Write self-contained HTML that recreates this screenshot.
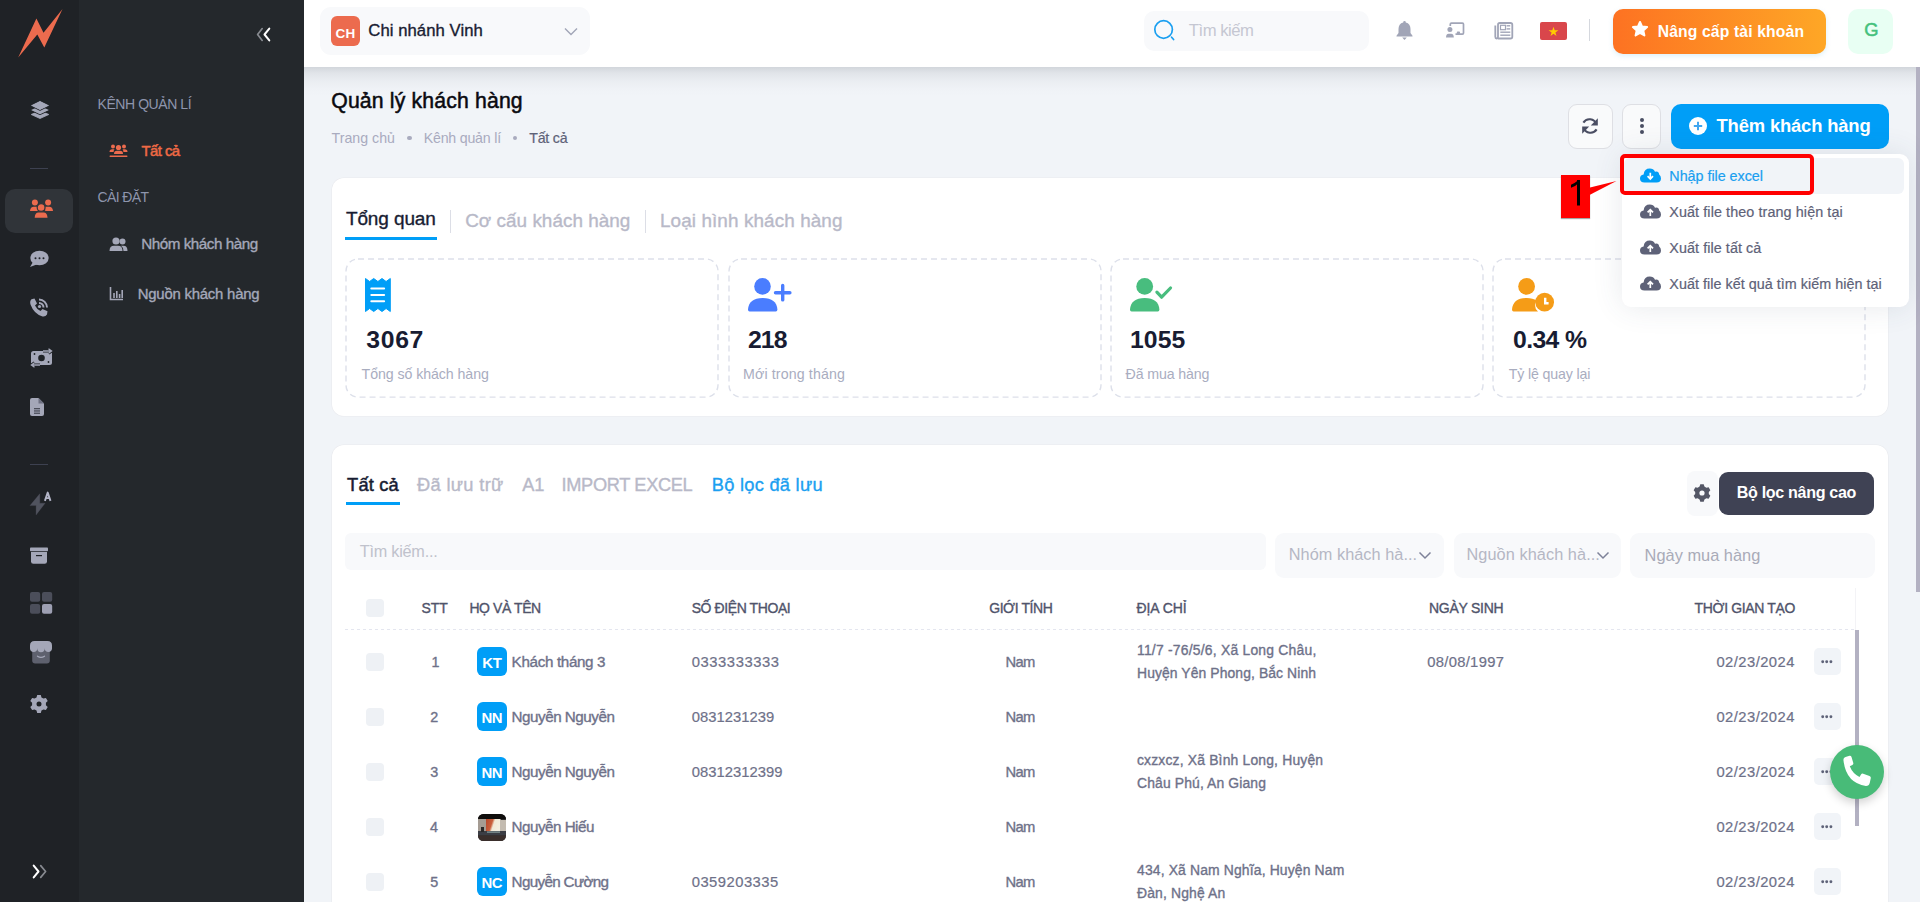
<!DOCTYPE html><html><head><meta charset="utf-8"><style>
*{box-sizing:border-box}
html,body{margin:0;padding:0;width:1920px;height:902px;overflow:hidden;background:#f1f4f8;font-family:"Liberation Sans",sans-serif}
.a{position:absolute}
.t{position:absolute;white-space:nowrap}
</style></head><body>
<div class="a" style="left:0px;top:0px;width:79px;height:902px;background:#1f2226"></div><div class="a" style="left:79px;top:0px;width:225px;height:902px;background:#24282c"></div><svg class="a" style="left:0px;top:0px;" width="80" height="80" viewBox="0 0 80 80"><polygon points="18.2,57.6 36.4,18.6 43.5,32.8 62.5,8.9 44.3,47.4 37.3,34.6" fill="#ec6b4e"/></svg><svg class="a" style="left:30px;top:99px;" width="20" height="22" viewBox="0 0 20 22"><path d="M1.1999999999999993 15.5 L10 11.5 L18.8 15.5 L10 19.5Z" fill="#a4a7b8" stroke="#a4a7b8" stroke-width="0.8" stroke-linejoin="round"/><path d="M0.5999999999999996 11.1 L10 6.699999999999999 L19.4 11.1 L10 15.5Z" fill="#a4a7b8" stroke="#1f2226" stroke-width="1.2" stroke-linejoin="round"/><path d="M1.0999999999999996 11.1 L10 7.0 L18.9 11.1 L10 15.2Z" fill="#a4a7b8"/><path d="M0.40000000000000036 6.5 L10 1.7999999999999998 L19.6 6.5 L10 11.2Z" fill="#a4a7b8" stroke="#1f2226" stroke-width="1.2" stroke-linejoin="round"/><path d="M0.9000000000000004 6.5 L10 2.0999999999999996 L19.1 6.5 L10 10.9Z" fill="#a4a7b8"/></svg><div class="a" style="left:30px;top:168px;width:18px;height:1px;background:#3d4150"></div><div class="a" style="left:5px;top:189px;width:68px;height:44px;background:#303439;border-radius:10px"></div><svg class="a" style="left:29px;top:199px;" width="25" height="20" viewBox="0 0 25 20"><g fill="#ec6b4e"><circle cx="5.9" cy="3.6" r="3"/><circle cx="19.1" cy="3.6" r="3"/><path d="M1 12.1 Q1.3 7.7 5 7.7 L8.8 7.7 L8.8 12.1Z"/><path d="M24 12.1 Q23.7 7.7 20 7.7 L16.2 7.7 L16.2 12.1Z"/></g><g fill="#ec6b4e" stroke="#303439" stroke-width="1.2"><circle cx="12.1" cy="8.5" r="3.9"/><path d="M5 19.3 Q5.2 12.8 9.5 12.8 L14.7 12.8 Q19 12.8 19.2 19.3Z"/></g></svg><svg class="a" style="left:29px;top:250px;" width="20" height="18" viewBox="0 0 20 18"><g fill="#a4a7b8"><ellipse cx="10.5" cy="8" rx="9.2" ry="7.3"/><path d="M4 12 L1 17 L9 14Z"/></g><g fill="#1f2226"><circle cx="6.5" cy="8.3" r="1"/><circle cx="10.5" cy="8.3" r="1"/><circle cx="14.5" cy="8.3" r="1"/></g></svg><svg class="a" style="left:29px;top:298px;" width="20" height="20" viewBox="0 0 20 20"><path d="M2.5 1.2 L5.5 0.5 L8 5.5 L6 7.5 Q7.5 11 11.5 13 L13.5 11 L18.5 13.3 L18 16.5 Q16.5 19 13.5 18.5 Q5 16 1.5 6.5 Q0.5 3 2.5 1.2Z" fill="#a4a7b8"/><path d="M10 1.5 A8 8 0 0 1 18 9.5" stroke="#a4a7b8" stroke-width="2" fill="none"/><path d="M10 5 A4.5 4.5 0 0 1 14.5 9.5" stroke="#a4a7b8" stroke-width="2" fill="none"/><circle cx="10.5" cy="8.5" r="1.6" fill="#a4a7b8"/></svg><svg class="a" style="left:29px;top:348px;" width="25" height="20" viewBox="0 0 25 20"><rect x="2" y="3" width="21" height="14" rx="2.5" fill="#a4a7b8"/><circle cx="12.5" cy="10" r="3.3" fill="#1f2226"/><circle cx="5.5" cy="6" r="0.9" fill="#1f2226"/><circle cx="19.5" cy="14" r="0.9" fill="#1f2226"/><path d="M14 3 L22 3 M19.5 0.8 L22.5 3 L19.5 5.2" stroke="#1f2226" stroke-width="3" fill="none"/><path d="M14 3 L22 3 M19.5 0.8 L22.5 3 L19.5 5.2" stroke="#a4a7b8" stroke-width="1.4" fill="none"/><path d="M11 17 L3 17 M5.5 14.8 L2.5 17 L5.5 19.2" stroke="#1f2226" stroke-width="3" fill="none"/><path d="M11 17 L3 17 M5.5 14.8 L2.5 17 L5.5 19.2" stroke="#a4a7b8" stroke-width="1.4" fill="none"/></svg><svg class="a" style="left:29px;top:397px;" width="16" height="20" viewBox="0 0 16 20"><path d="M3 1 L9.5 1 L15 6.5 L15 17 Q15 19 13 19 L3 19 Q1 19 1 17 L1 3 Q1 1 3 1Z" fill="#a4a7b8"/><path d="M9.5 1 L9.5 6.5 L15 6.5Z" fill="#6e7182"/><rect x="5" y="11" width="6" height="1.3" fill="#4b4e5a"/><rect x="5" y="13.3" width="6" height="1.3" fill="#4b4e5a"/><rect x="5" y="15.6" width="6" height="1.3" fill="#4b4e5a"/></svg><div class="a" style="left:30px;top:464px;width:18px;height:1px;background:#3d4150"></div><svg class="a" style="left:29px;top:491px;" width="24" height="26" viewBox="0 0 24 26"><polygon points="10.8,2.7 1,14.6 7.1,14.6 7.1,23.9 16.1,12.2 10.8,12.2" fill="#50535e" stroke="#50535e" stroke-width="0.3" stroke-linejoin="round"/><path d="M15.9 9.9 L18.7 1.6 L21.5 9.9 M16.8 7.1 L20.6 7.1" stroke="#b4b6c8" stroke-width="1.9" fill="none" stroke-linejoin="round"/></svg><svg class="a" style="left:29px;top:546px;" width="20" height="19" viewBox="0 0 20 19"><rect x="1" y="1.5" width="18" height="3.8" rx="0.8" fill="#a4a7b8"/><path d="M2 6 L18 6 L18 15.5 Q18 17.8 15.7 17.8 L4.3 17.8 Q2 17.8 2 15.5Z" fill="#a4a7b8"/><rect x="7" y="9" width="6" height="1.2" fill="#1f2226"/></svg><svg class="a" style="left:29px;top:591px;" width="24" height="24" viewBox="0 0 24 24"><rect x="1" y="1" width="10.2" height="9.8" rx="2" fill="#4b4e5a"/><rect x="13" y="1" width="10.2" height="9.8" rx="2" fill="#4b4e5a"/><rect x="1" y="13" width="10.2" height="9.8" rx="2" fill="#4b4e5a"/><rect x="13" y="13" width="10.2" height="9.8" rx="2" fill="#9d9fb2"/></svg><svg class="a" style="left:29px;top:640px;" width="24" height="25" viewBox="0 0 24 25"><path d="M3.2 9 L20.8 9 L20.8 20.5 Q20.8 23.5 17.8 23.5 L6.2 23.5 Q3.2 23.5 3.2 20.5Z" fill="#5e616e"/><path d="M8.5 16.2 Q12 18.6 15.5 16.2" stroke="#a4a7b8" stroke-width="1.3" stroke-linecap="round" fill="none"/><path d="M5.5 1 L18.5 1 Q23 1 23 5.5 L23 8.5 A3.67 3.67 0 0 1 15.67 8.5 A3.67 3.67 0 0 1 8.33 8.5 A3.67 3.67 0 0 1 1 8.5 L1 5.5 Q1 1 5.5 1Z" fill="#a4a7b8"/><path d="M8.33 8.5 L8.33 9.5 M15.67 8.5 L15.67 9.5" stroke="#5e616e" stroke-width="0.01"/></svg><svg class="a" style="left:29px;top:694px;" width="20" height="20" viewBox="0 0 20 20"><path d="M7.53 3.45 L8.19 0.98 L11.81 0.98 L12.47 3.45 L14.44 4.59 L16.91 3.92 L18.72 7.06 L16.91 8.86 L16.91 11.14 L18.72 12.94 L16.91 16.08 L14.44 15.41 L12.47 16.55 L11.81 19.02 L8.19 19.02 L7.53 16.55 L5.56 15.41 L3.09 16.08 L1.28 12.94 L3.09 11.14 L3.09 8.86 L1.28 7.06 L3.09 3.92 L5.56 4.59Z M12.5 10 A2.5 2.5 0 1 0 7.5 10 A2.5 2.5 0 1 0 12.5 10Z" fill="#a4a7b8" fill-rule="evenodd"/></svg><svg class="a" style="left:30px;top:862px;" width="19" height="19" viewBox="0 0 19 19"><path d="M3.7 3.6 L8.5 9.5 L3.7 15.4" stroke="#ffffff" stroke-width="2" stroke-linecap="round" stroke-linejoin="round" fill="none"/><path d="M10.7 3.6 L15.6 9.5 L10.7 15.4" stroke="#878a90" stroke-width="1.7" stroke-linecap="round" stroke-linejoin="round" fill="none"/></svg><div class="a" style="left:304px;top:0px;width:0px;height:0px;"></div><svg class="a" style="left:255px;top:26px;" width="17" height="17" viewBox="0 0 17 17"><path d="M7.2 2.6 L2.6 8.5 L7.2 14.4" stroke="#878a90" stroke-width="1.7" stroke-linecap="round" stroke-linejoin="round" fill="none"/><path d="M14.3 2.6 L9.5 8.5 L14.3 14.4" stroke="#ffffff" stroke-width="2" stroke-linecap="round" stroke-linejoin="round" fill="none"/></svg><div class="t " style="left:97.5px;top:97.00px;font-size:14.03px;line-height:14.03px;color:#8e95ad;font-weight:400;letter-spacing:-0.438px;">KÊNH QUẢN LÍ</div><svg class="a" style="left:109px;top:144px;" width="19" height="14" viewBox="0 0 19 14"><g fill="#ec6b4e"><circle cx="4" cy="2.4" r="2"/><circle cx="15" cy="2.4" r="2"/><circle cx="9.5" cy="3.5" r="2.6"/><path d="M0.5 8 Q0.5 5.3 3.3 5.3 L5.5 5.3 Q4.5 6.5 4.6 8Z"/><path d="M18.5 8 Q18.5 5.3 15.7 5.3 L13.5 5.3 Q14.5 6.5 14.4 8Z"/><path d="M5 10 Q5 6.8 8 6.8 L11 6.8 Q14 6.8 14 10Z"/><rect x="0.5" y="11.5" width="18" height="1.5" rx="0.7"/></g></svg><div class="t " style="left:141.4px;top:144.00px;font-size:14.93px;line-height:14.93px;color:#ee6a45;font-weight:400;-webkit-text-stroke:0.5px #ee6a45;letter-spacing:-0.538px;">Tất cả</div><div class="t " style="left:97.5px;top:190.00px;font-size:14.03px;line-height:14.03px;color:#8e95ad;font-weight:400;letter-spacing:-0.608px;">CÀI ĐẶT</div><svg class="a" style="left:109px;top:237px;" width="19" height="15" viewBox="0 0 19 15"><g fill="#a4a7b8"><circle cx="7" cy="4" r="3.6"/><path d="M0.5 14 Q0.5 8.8 5 8.8 L9 8.8 Q13.5 8.8 13.5 14Z"/><circle cx="13.5" cy="4.5" r="3"/><path d="M12 8.8 L14.5 8.8 Q18.5 8.8 18.5 14 L14.5 14 Q14.5 10.5 12 8.8Z"/></g></svg><div class="t " style="left:141.2px;top:236.00px;font-size:15.22px;line-height:15.22px;color:#a4a8ba;font-weight:400;-webkit-text-stroke:0.35px #a4a8ba;letter-spacing:-0.467px;">Nhóm khách hàng</div><svg class="a" style="left:109px;top:286px;" width="15" height="15" viewBox="0 0 15 15"><path d="M1.5 1 L1.5 13.5 L14 13.5" stroke="#a4a7b8" stroke-width="1.6" fill="none"/><g fill="#a4a7b8"><rect x="4.2" y="7" width="1.6" height="5"/><rect x="7" y="5" width="1.6" height="7"/><rect x="9.8" y="8" width="1.6" height="4"/><rect x="12.4" y="4" width="1.6" height="8"/></g></svg><div class="t " style="left:137.7px;top:287.00px;font-size:14.93px;line-height:14.93px;color:#a4a8ba;font-weight:400;-webkit-text-stroke:0.35px #a4a8ba;letter-spacing:-0.223px;">Nguồn khách hàng</div><div class="a" style="left:304px;top:67px;width:1612px;height:30px;background:linear-gradient(180deg,rgba(20,30,45,0.14) 0px,rgba(20,30,45,0.075) 6px,rgba(20,30,45,0.03) 14px,rgba(20,30,45,0.008) 22px,rgba(20,30,45,0) 30px)"></div><div class="a" style="left:304px;top:0px;width:1616px;height:67px;background:#fff;z-index:2"></div><div style="position:absolute;left:0;top:0;z-index:3"><div class="a" style="left:320px;top:7px;width:270px;height:48px;background:#f8f9fb;border-radius:11px"></div><div class="a" style="left:331px;top:16px;width:29px;height:30px;background:#ec6b4e;border-radius:6px"></div><div class="t " style="left:335.4px;top:27.00px;font-size:13.49px;line-height:13.49px;color:#fff;font-weight:700;letter-spacing:0.315px;">CH</div><div class="t " style="left:368.3px;top:23.00px;font-size:16.67px;line-height:16.67px;color:#181c32;font-weight:400;-webkit-text-stroke:0.35px #181c32;letter-spacing:0.069px;">Chi nhánh Vinh</div><svg class="a" style="left:564px;top:27px;" width="14" height="9" viewBox="0 0 14 9"><path d="M1 1.5 L7 7.5 L13 1.5" stroke="#a1a5b7" stroke-width="1.4" fill="none"/></svg><div class="a" style="left:1144px;top:11px;width:225px;height:40px;background:#f8f9fb;border-radius:10px"></div><svg class="a" style="left:1152px;top:18px;" width="24" height="24" viewBox="0 0 24 24"><circle cx="11.6" cy="11.5" r="8.8" stroke="#1a9ff0" stroke-width="1.7" fill="none"/><path d="M19.6 19.2 L21.6 21.5" stroke="#1a9ff0" stroke-width="1.7" stroke-linecap="round"/></svg><div class="t " style="left:1188.75px;top:23.00px;font-size:16.67px;line-height:16.67px;color:#c5c7d2;font-weight:400;letter-spacing:-0.461px;">Tìm kiếm</div><svg class="a" style="left:1396px;top:20px;" width="17" height="21" viewBox="0 0 17 21"><path d="M8.5 1 Q9.8 1 9.8 2.4 Q14.5 3.5 14.5 9 L14.5 13 L16.5 15.8 L16.5 16.5 L0.5 16.5 L0.5 15.8 L2.5 13 L2.5 9 Q2.5 3.5 7.2 2.4 Q7.2 1 8.5 1Z" fill="#a1a5b7"/><path d="M6.2 17.6 L10.8 17.6 L8.5 20Z" fill="#a1a5b7"/></svg><svg class="a" style="left:1445px;top:22px;" width="20" height="17" viewBox="0 0 20 17"><path d="M5.3 4 L5.3 2.2 Q5.3 1.1 6.4 1.1 L17.4 1.1 Q18.5 1.1 18.5 2.2 L18.5 11 Q18.5 12.1 17.4 12.1 L10.5 12.1" stroke="#a1a5b7" stroke-width="1.7" fill="none"/><circle cx="4.9" cy="7.4" r="2.5" fill="#a1a5b7"/><path d="M1 15.6 Q1 11.8 3.6 11.8 L6.2 11.8 Q8.8 11.8 8.8 15.6Z" fill="#a1a5b7"/><rect x="11.8" y="9.6" width="3.2" height="2.4" rx="0.8" fill="#a1a5b7"/></svg><svg class="a" style="left:1493px;top:22px;" width="21" height="18" viewBox="0 0 21 18"><path d="M5 16.5 L17.5 16.5 Q19.3 16.5 19.3 14.7 L19.3 2.8 Q19.3 1 17.5 1 L6.8 1 Q5 1 5 2.8 L5 14.5 Q5 16.5 3.5 16.5 Q2.3 16.5 2.3 14.8 L2.3 3.5" stroke="#a1a5b7" stroke-width="1.8" fill="none"/><rect x="7.5" y="3.3" width="5" height="4.4" fill="none" stroke="#a1a5b7" stroke-width="1.2"/><rect x="13.6" y="3.1" width="3.6" height="1.4" fill="#a1a5b7"/><rect x="13.6" y="6.2" width="3.6" height="1.4" fill="#a1a5b7"/><rect x="7.3" y="9.5" width="10" height="1.4" fill="#a1a5b7"/><rect x="7.3" y="12.5" width="10" height="1.4" fill="#a1a5b7"/></svg><div class="a" style="left:1540px;top:22px;width:27px;height:18px;background:#d9464b;border-radius:2px"></div><svg class="a" style="left:1547px;top:25px;" width="13" height="13" viewBox="0 0 13 13"><polygon points="6.5,1.8 7.7,5.3 11.4,5.3 8.4,7.5 9.5,11 6.5,8.8 3.5,11 4.6,7.5 1.6,5.3 5.3,5.3" fill="#ffcc00"/></svg><div class="a" style="left:1589px;top:19px;width:1px;height:22px;background:#d5d8de"></div><div class="a" style="left:1613px;top:9px;width:213px;height:45px;background:linear-gradient(90deg,#fd7222,#fea726);border-radius:10px;box-shadow:0 2px 5px rgba(120,200,230,0.25)"></div><svg class="a" style="left:1631px;top:20px;" width="18" height="18" viewBox="0 0 18 18"><polygon points="9,2 11.1,6.6 16.1,7.1 12.3,10.5 13.4,15.5 9,12.9 4.6,15.5 5.7,10.5 1.9,7.1 6.9,6.6" fill="#fff" stroke="#fff" stroke-width="2" stroke-linejoin="round"/></svg><div class="t " style="left:1657.7px;top:24.00px;font-size:15.72px;line-height:15.72px;color:#fff;font-weight:700;letter-spacing:0.128px;">Nâng cấp tài khoản</div><div class="a" style="left:1848px;top:9px;width:45px;height:45px;background:#e8fff3;border-radius:10px"></div><div class="t " style="left:1864.35px;top:21.00px;font-size:18.41px;line-height:18.41px;color:#45c17c;font-weight:400;-webkit-text-stroke:0.5px #45c17c;letter-spacing:-1.820px;">G</div></div><div class="a" style="left:1916px;top:67px;width:4px;height:525px;background:#b3b1c2"></div><div class="t " style="left:331.25px;top:90.00px;font-size:21.23px;line-height:21.23px;color:#0a0a0f;font-weight:400;-webkit-text-stroke:0.5px #0a0a0f;letter-spacing:0.156px;">Quản lý khách hàng</div><div class="t " style="left:331.6px;top:131.00px;font-size:14.2px;line-height:14.2px;color:#a9abbf;font-weight:400;letter-spacing:-0.001px;">Trang chủ</div><div class="a" style="left:407px;top:135.6px;width:4.8px;height:4.8px;background:#a9abbf;border-radius:50%"></div><div class="t " style="left:423.7px;top:131.00px;font-size:14.2px;line-height:14.2px;color:#a9abbf;font-weight:400;letter-spacing:-0.204px;">Kênh quản lí</div><div class="a" style="left:512.7px;top:135.6px;width:4.8px;height:4.8px;background:#a9abbf;border-radius:50%"></div><div class="t " style="left:529.2px;top:131.00px;font-size:14.2px;line-height:14.2px;color:#5e6278;font-weight:400;-webkit-text-stroke:0.2px #5e6278;letter-spacing:-0.212px;">Tất cả</div><div class="a" style="left:1568px;top:104px;width:44.5px;height:44.5px;background:#f9fafb;border:1px solid #dedfe4;border-radius:9px"></div><svg class="a" style="left:1580px;top:117px;" width="20" height="18" viewBox="0 0 20 18"><path d="M16.3 7.2 A7.2 7.2 0 0 0 3.4 5.6" stroke="#4a4e63" stroke-width="2.1" fill="none"/><polygon points="17.8,1.3 17.8,8.6 10.8,8.6" fill="#4a4e63"/><path d="M3.7 10.8 A7.2 7.2 0 0 0 16.6 12.4" stroke="#4a4e63" stroke-width="2.1" fill="none"/><polygon points="2.2,16.7 2.2,9.4 9.2,9.4" fill="#4a4e63"/></svg><div class="a" style="left:1622.3px;top:104px;width:39px;height:44.5px;background:#f9fafb;border:1px solid #dedfe4;border-radius:9px"></div><div class="a" style="left:1640px;top:118.2px;width:4.2px;height:4.2px;background:#4a4e63;border-radius:50%"></div><div class="a" style="left:1640px;top:123.80000000000001px;width:4.2px;height:4.2px;background:#4a4e63;border-radius:50%"></div><div class="a" style="left:1640px;top:129.5px;width:4.2px;height:4.2px;background:#4a4e63;border-radius:50%"></div><div class="a" style="left:1671px;top:104px;width:218px;height:45px;background:#009ef7;border-radius:10px"></div><svg class="a" style="left:1689px;top:117px;" width="18" height="18" viewBox="0 0 18 18"><circle cx="9" cy="9" r="9" fill="#fff"/><path d="M9 4.8 L9 13.2 M4.8 9 L13.2 9" stroke="#40a6f0" stroke-width="2"/></svg><div class="t " style="left:1716.5px;top:117.00px;font-size:18.41px;line-height:18.41px;color:#fff;font-weight:700;letter-spacing:-0.165px;">Thêm khách hàng</div><div class="a" style="left:332px;top:178px;width:1556px;height:238px;background:#fff;border-radius:12px;box-shadow:0 0 0 0.6px #e9eaee"></div><div class="t " style="left:345.9px;top:209.00px;font-size:18.99px;line-height:18.99px;color:#181c32;font-weight:400;-webkit-text-stroke:0.35px #181c32;letter-spacing:-0.101px;">Tổng quan</div><div class="a" style="left:345px;top:237px;width:92px;height:3px;background:#009ef7"></div><div class="a" style="left:450px;top:210px;width:1px;height:23px;background:#dcdee6"></div><div class="t " style="left:465.2px;top:212.00px;font-size:18.91px;line-height:18.91px;color:#b8b9c8;font-weight:400;-webkit-text-stroke:0.35px #b8b9c8;letter-spacing:0.023px;">Cơ cấu khách hàng</div><div class="a" style="left:645px;top:210px;width:1px;height:23px;background:#dcdee6"></div><div class="t " style="left:660px;top:212.00px;font-size:18.91px;line-height:18.91px;color:#b8b9c8;font-weight:400;-webkit-text-stroke:0.35px #b8b9c8;letter-spacing:0.087px;">Loại hình khách hàng</div><svg class="a" style="left:345px;top:257.9px;" width="375" height="141" viewBox="0 0 375 141"><rect x="1" y="1" width="372" height="138.1" rx="12" fill="none" stroke="#dde0ea" stroke-width="1.4" stroke-dasharray="6 4"/></svg><svg class="a" style="left:727.9px;top:257.9px;" width="375" height="141" viewBox="0 0 375 141"><rect x="1" y="1" width="372" height="138.1" rx="12" fill="none" stroke="#dde0ea" stroke-width="1.4" stroke-dasharray="6 4"/></svg><svg class="a" style="left:1109.5px;top:257.9px;" width="375" height="141" viewBox="0 0 375 141"><rect x="1" y="1" width="372" height="138.1" rx="12" fill="none" stroke="#dde0ea" stroke-width="1.4" stroke-dasharray="6 4"/></svg><svg class="a" style="left:1491.9px;top:257.9px;" width="375" height="141" viewBox="0 0 375 141"><rect x="1" y="1" width="372" height="138.1" rx="12" fill="none" stroke="#dde0ea" stroke-width="1.4" stroke-dasharray="6 4"/></svg><svg class="a" style="left:365px;top:277px;" width="26" height="36" viewBox="0 0 26 36"><path d="M0.5 1.5 L4.6 4.5 L8.7 1.5 L12.9 4.5 L17 1.5 L21.1 4.5 L25.3 1.5 L25.3 34.5 L21.1 31.5 L17 34.5 L12.9 31.5 L8.7 34.5 L4.6 31.5 L0.5 34.5Z" fill="#009ef7" stroke="#009ef7" stroke-width="1" stroke-linejoin="round"/><rect x="5.3" y="10.4" width="14.8" height="2" rx="1" fill="#fff"/><rect x="5.3" y="17" width="14.8" height="2" rx="1" fill="#fff"/><rect x="5.3" y="23.2" width="14.8" height="2" rx="1" fill="#fff"/></svg><div class="t " style="left:366.3px;top:328.00px;font-size:24.78px;line-height:24.78px;color:#181c32;font-weight:700;letter-spacing:0.657px;">3067</div><div class="t " style="left:361.6px;top:367.00px;font-size:14.2px;line-height:14.2px;color:#a9adbf;font-weight:400;letter-spacing:-0.075px;">Tổng số khách hàng</div><svg class="a" style="left:747px;top:277px;overflow:visible" width="40" height="36" viewBox="0 0 40 36"><circle cx="15.5" cy="9.4" r="8.3" fill="#4a7dff"/><path d="M2.6 34.6 Q1 34.6 1 32.6 Q1.8 21 15.7 21 Q29.6 21 30.4 32.6 Q30.4 34.6 28.8 34.6Z" fill="#4a7dff"/><path d="M35.7 8.5 L35.7 22.9 M28.5 15.7 L42.9 15.7" stroke="#4a7dff" stroke-width="3.4" stroke-linecap="round"/></svg><div class="t " style="left:748px;top:328.00px;font-size:24.78px;line-height:24.78px;color:#181c32;font-weight:700;letter-spacing:-0.923px;">218</div><div class="t " style="left:743px;top:367.00px;font-size:14.2px;line-height:14.2px;color:#a9adbf;font-weight:400;letter-spacing:0.137px;">Mới trong tháng</div><svg class="a" style="left:1129px;top:277px;" width="44" height="36" viewBox="0 0 44 36"><circle cx="15.7" cy="9.4" r="8.4" fill="#48bd7e"/><path d="M2.6 34.6 Q1 34.6 1 32.6 Q1.8 21 15.7 21 Q29.6 21 30.4 32.6 Q30.4 34.6 28.8 34.6Z" fill="#48bd7e"/><path d="M27.9 15.2 L32.6 20.2 L41.5 11" stroke="#48bd7e" stroke-width="3.2" stroke-linecap="round" stroke-linejoin="round" fill="none"/></svg><div class="t " style="left:1130px;top:328.00px;font-size:24.78px;line-height:24.78px;color:#181c32;font-weight:700;letter-spacing:0.091px;">1055</div><div class="t " style="left:1125.6px;top:367.00px;font-size:14.2px;line-height:14.2px;color:#a9adbf;font-weight:400;letter-spacing:-0.146px;">Đã mua hàng</div><svg class="a" style="left:1511px;top:277px;" width="44" height="36" viewBox="0 0 44 36"><circle cx="15.6" cy="9.4" r="8.4" fill="#f59c17"/><path d="M2.6 34.6 Q1 34.6 1 32.6 Q1.8 21 15.7 21 Q22 21 25.5 23.5 Q24 26 24 28 Q24 32 27 34.6Z" fill="#f59c17"/><circle cx="33.6" cy="25.2" r="9.4" fill="#f59c17"/><path d="M34.2 20.8 L34.2 26.2 L37.6 26.2" stroke="#fff" stroke-width="2.4" fill="none"/></svg><div class="t " style="left:1513px;top:328.00px;font-size:24.78px;line-height:24.78px;color:#181c32;font-weight:700;letter-spacing:-0.629px;">0.34 %</div><div class="t " style="left:1508.8px;top:367.00px;font-size:14.2px;line-height:14.2px;color:#a9adbf;font-weight:400;letter-spacing:-0.159px;">Tỷ lệ quay lại</div><div class="a" style="left:332px;top:445px;width:1556px;height:500px;background:#fff;border-radius:12px;box-shadow:0 0 0 0.6px #e9eaee"></div><div class="t " style="left:347.1px;top:476.00px;font-size:18.26px;line-height:18.26px;color:#181c32;font-weight:400;-webkit-text-stroke:0.5px #181c32;letter-spacing:0.172px;">Tất cả</div><div class="a" style="left:346px;top:502px;width:54px;height:3px;background:#009ef7"></div><div class="t " style="left:417px;top:476.00px;font-size:18.26px;line-height:18.26px;color:#b8b9c8;font-weight:400;-webkit-text-stroke:0.35px #b8b9c8;letter-spacing:0.333px;">Đã lưu trữ</div><div class="t " style="left:522.2px;top:476.00px;font-size:18.26px;line-height:18.26px;color:#b8b9c8;font-weight:400;-webkit-text-stroke:0.35px #b8b9c8;">A1</div><div class="t " style="left:561.6px;top:476.00px;font-size:18.26px;line-height:18.26px;color:#b8b9c8;font-weight:400;-webkit-text-stroke:0.35px #b8b9c8;letter-spacing:-0.373px;">IMPORT EXCEL</div><div class="t " style="left:711.8px;top:476.00px;font-size:18.26px;line-height:18.26px;color:#1b9ff1;font-weight:400;-webkit-text-stroke:0.35px #1b9ff1;letter-spacing:0.263px;">Bộ lọc đã lưu</div><div class="a" style="left:1686.5px;top:471px;width:31.5px;height:44.5px;background:#f8f9fb;border-radius:8px"></div><svg class="a" style="left:1692px;top:483px;" width="20" height="20" viewBox="0 0 20 20"><path d="M7.57 3.54 L8.27 1.37 L11.73 1.37 L12.43 3.54 L14.38 4.67 L16.61 4.19 L18.34 7.19 L16.81 8.88 L16.81 11.12 L18.34 12.81 L16.61 15.81 L14.38 15.33 L12.43 16.46 L11.73 18.63 L8.27 18.63 L7.57 16.46 L5.62 15.33 L3.39 15.81 L1.66 12.81 L3.19 11.12 L3.19 8.88 L1.66 7.19 L3.39 4.19 L5.62 4.67Z M12.6 10 A2.6 2.6 0 1 0 7.4 10 A2.6 2.6 0 1 0 12.6 10Z" fill="#545766" fill-rule="evenodd"/></svg><div class="a" style="left:1719px;top:472px;width:155px;height:43px;background:#3f4254;border-radius:9px"></div><div class="t " style="left:1736.7px;top:484.00px;font-size:16.09px;line-height:16.09px;color:#fff;font-weight:700;letter-spacing:-0.319px;">Bộ lọc nâng cao</div><div class="a" style="left:345px;top:533px;width:921px;height:37px;background:#f8f9fb;border-radius:6px"></div><div class="t " style="left:359.7px;top:543.00px;font-size:16.23px;line-height:16.23px;color:#c0c2cc;font-weight:400;letter-spacing:-0.215px;">Tìm kiếm...</div><div class="a" style="left:1275px;top:533px;width:168.5px;height:44.5px;background:#f8f9fb;border-radius:9px"></div><div class="t " style="left:1288.75px;top:546.00px;font-size:16.3px;line-height:16.3px;color:#b5b7c4;font-weight:400;letter-spacing:0.050px;">Nhóm khách hà...</div><svg class="a" style="left:1418px;top:551px;" width="14" height="9" viewBox="0 0 14 9"><path d="M1.5 1.5 L7 7 L12.5 1.5" stroke="#7e8299" stroke-width="1.5" fill="none"/></svg><div class="a" style="left:1453.5px;top:533px;width:167px;height:44.5px;background:#f8f9fb;border-radius:9px"></div><div class="t " style="left:1466.5px;top:546.00px;font-size:16.3px;line-height:16.3px;color:#b5b7c4;font-weight:400;letter-spacing:0.075px;">Nguồn khách hà...</div><svg class="a" style="left:1596px;top:551px;" width="14" height="9" viewBox="0 0 14 9"><path d="M1.5 1.5 L7 7 L12.5 1.5" stroke="#7e8299" stroke-width="1.5" fill="none"/></svg><div class="a" style="left:1630px;top:533px;width:245px;height:44.5px;background:#f8f9fb;border-radius:9px"></div><div class="t " style="left:1644.6px;top:547.00px;font-size:16.38px;line-height:16.38px;color:#a9abb8;font-weight:400;letter-spacing:0.013px;">Ngày mua hàng</div><div class="a" style="left:366px;top:599px;width:18px;height:18px;background:#eef1f5;border-radius:4px"></div><div class="t " style="left:421.5px;top:601.00px;font-size:13.98px;line-height:13.98px;color:#50546b;font-weight:400;-webkit-text-stroke:0.35px #50546b;letter-spacing:-0.052px;">STT</div><div class="t " style="left:469.4px;top:601.00px;font-size:13.98px;line-height:13.98px;color:#50546b;font-weight:400;-webkit-text-stroke:0.35px #50546b;letter-spacing:-0.412px;">HỌ VÀ TÊN</div><div class="t " style="left:691.7px;top:601.00px;font-size:13.98px;line-height:13.98px;color:#50546b;font-weight:400;-webkit-text-stroke:0.35px #50546b;letter-spacing:-0.395px;">SỐ ĐIỆN THOẠI</div><div class="t " style="left:989.2px;top:601.00px;font-size:13.98px;line-height:13.98px;color:#50546b;font-weight:400;-webkit-text-stroke:0.35px #50546b;letter-spacing:-0.409px;">GIỚI TÍNH</div><div class="t " style="left:1136.4px;top:601.00px;font-size:13.98px;line-height:13.98px;color:#50546b;font-weight:400;-webkit-text-stroke:0.35px #50546b;letter-spacing:-0.016px;">ĐỊA CHỈ</div><div class="t " style="left:1429px;top:601.00px;font-size:13.98px;line-height:13.98px;color:#50546b;font-weight:400;-webkit-text-stroke:0.35px #50546b;letter-spacing:-0.244px;">NGÀY SINH</div><div class="t " style="left:1694.6px;top:601.00px;font-size:13.98px;line-height:13.98px;color:#50546b;font-weight:400;-webkit-text-stroke:0.35px #50546b;letter-spacing:-0.345px;">THỜI GIAN TẠO</div><div class="a" style="left:345px;top:629px;width:1510px;height:1px;background-image:linear-gradient(90deg,#e4e6ef 50%,transparent 50%);background-size:6px 1px"></div><div class="a" style="left:1855px;top:588px;width:1px;height:42px;background:#f3f3f6"></div><div class="a" style="left:366px;top:653px;width:18px;height:18px;background:#eef1f5;border-radius:4px"></div><div class="t " style="left:431.5px;top:655.00px;font-size:14.35px;line-height:14.35px;color:#6e7189;font-weight:400;-webkit-text-stroke:0.35px #6e7189;letter-spacing:-1.981px;">1</div><div class="a" style="left:477px;top:647px;width:30px;height:29px;background:#009ef7;border-radius:6px"></div><div class="t " style="left:482.2px;top:656.00px;font-size:14.93px;line-height:14.93px;color:#fff;font-weight:700;letter-spacing:-0.302px;">KT</div><div class="t " style="left:511.6px;top:654.00px;font-size:15.22px;line-height:15.22px;color:#6e7189;font-weight:400;-webkit-text-stroke:0.35px #6e7189;letter-spacing:-0.347px;">Khách tháng 3</div><div class="t " style="left:691.7px;top:655.00px;font-size:14.78px;line-height:14.78px;color:#6e7189;font-weight:400;-webkit-text-stroke:0.2px #6e7189;letter-spacing:0.578px;">0333333333</div><div class="t " style="left:1005.4px;top:655.00px;font-size:14.78px;line-height:14.78px;color:#6e7189;font-weight:400;-webkit-text-stroke:0.35px #6e7189;letter-spacing:-0.603px;">Nam</div><div class="t " style="left:1137px;top:644.00px;font-size:13.91px;line-height:13.91px;color:#6e7189;font-weight:400;-webkit-text-stroke:0.35px #6e7189;letter-spacing:0.214px;">11/7 -76/5/6, Xã Long Châu,</div><div class="t " style="left:1137px;top:667.00px;font-size:13.91px;line-height:13.91px;color:#6e7189;font-weight:400;-webkit-text-stroke:0.35px #6e7189;letter-spacing:0.090px;">Huyện Yên Phong, Bắc Ninh</div><div class="t " style="left:1427.2px;top:655.00px;font-size:14.78px;line-height:14.78px;color:#6e7189;font-weight:400;-webkit-text-stroke:0.2px #6e7189;letter-spacing:0.314px;">08/08/1997</div><div class="t " style="left:1716.4px;top:655.00px;font-size:14.78px;line-height:14.78px;color:#6e7189;font-weight:400;-webkit-text-stroke:0.2px #6e7189;letter-spacing:0.458px;">02/23/2024</div><div class="a" style="left:1814px;top:648px;width:27px;height:27px;background:#f1f4f8;border-radius:5px"></div><svg class="a" style="left:1818px;top:658px;" width="18" height="8" viewBox="0 0 18 8"><circle cx="4.7" cy="3.80" r="1.45" fill="#5e6278"/><circle cx="8.7" cy="3.80" r="1.45" fill="#5e6278"/><circle cx="12.9" cy="3.80" r="1.45" fill="#5e6278"/></svg><div class="a" style="left:366px;top:708px;width:18px;height:18px;background:#eef1f5;border-radius:4px"></div><div class="t " style="left:430.25px;top:710.00px;font-size:14.35px;line-height:14.35px;color:#6e7189;font-weight:400;-webkit-text-stroke:0.35px #6e7189;letter-spacing:0.519px;">2</div><div class="a" style="left:477px;top:702px;width:30px;height:29px;background:#009ef7;border-radius:6px"></div><div class="t " style="left:481.5px;top:711.00px;font-size:14.93px;line-height:14.93px;color:#fff;font-weight:700;letter-spacing:-0.565px;">NN</div><div class="t " style="left:511.6px;top:709.00px;font-size:15.22px;line-height:15.22px;color:#6e7189;font-weight:400;-webkit-text-stroke:0.35px #6e7189;letter-spacing:-0.488px;">Nguyễn Nguyễn</div><div class="t " style="left:691.7px;top:710.00px;font-size:14.78px;line-height:14.78px;color:#6e7189;font-weight:400;-webkit-text-stroke:0.2px #6e7189;letter-spacing:0.033px;">0831231239</div><div class="t " style="left:1005.4px;top:710.00px;font-size:14.78px;line-height:14.78px;color:#6e7189;font-weight:400;-webkit-text-stroke:0.35px #6e7189;letter-spacing:-0.603px;">Nam</div><div class="t " style="left:1716.4px;top:710.00px;font-size:14.78px;line-height:14.78px;color:#6e7189;font-weight:400;-webkit-text-stroke:0.2px #6e7189;letter-spacing:0.458px;">02/23/2024</div><div class="a" style="left:1814px;top:703px;width:27px;height:27px;background:#f1f4f8;border-radius:5px"></div><svg class="a" style="left:1818px;top:713px;" width="18" height="8" viewBox="0 0 18 8"><circle cx="4.7" cy="3.80" r="1.45" fill="#5e6278"/><circle cx="8.7" cy="3.80" r="1.45" fill="#5e6278"/><circle cx="12.9" cy="3.80" r="1.45" fill="#5e6278"/></svg><div class="a" style="left:366px;top:763px;width:18px;height:18px;background:#eef1f5;border-radius:4px"></div><div class="t " style="left:430.25px;top:765.00px;font-size:14.35px;line-height:14.35px;color:#6e7189;font-weight:400;-webkit-text-stroke:0.35px #6e7189;letter-spacing:0.519px;">3</div><div class="a" style="left:477px;top:757px;width:30px;height:29px;background:#009ef7;border-radius:6px"></div><div class="t " style="left:481.5px;top:766.00px;font-size:14.93px;line-height:14.93px;color:#fff;font-weight:700;letter-spacing:-0.565px;">NN</div><div class="t " style="left:511.6px;top:764.00px;font-size:15.22px;line-height:15.22px;color:#6e7189;font-weight:400;-webkit-text-stroke:0.35px #6e7189;letter-spacing:-0.488px;">Nguyễn Nguyễn</div><div class="t " style="left:691.7px;top:765.00px;font-size:14.78px;line-height:14.78px;color:#6e7189;font-weight:400;-webkit-text-stroke:0.2px #6e7189;letter-spacing:0.038px;">08312312399</div><div class="t " style="left:1005.4px;top:765.00px;font-size:14.78px;line-height:14.78px;color:#6e7189;font-weight:400;-webkit-text-stroke:0.35px #6e7189;letter-spacing:-0.603px;">Nam</div><div class="t " style="left:1137px;top:754.00px;font-size:13.91px;line-height:13.91px;color:#6e7189;font-weight:400;-webkit-text-stroke:0.35px #6e7189;letter-spacing:0.169px;">cxzxcz, Xã Bình Long, Huyện</div><div class="t " style="left:1137px;top:777.00px;font-size:13.91px;line-height:13.91px;color:#6e7189;font-weight:400;-webkit-text-stroke:0.35px #6e7189;letter-spacing:0.128px;">Châu Phú, An Giang</div><div class="t " style="left:1716.4px;top:765.00px;font-size:14.78px;line-height:14.78px;color:#6e7189;font-weight:400;-webkit-text-stroke:0.2px #6e7189;letter-spacing:0.458px;">02/23/2024</div><div class="a" style="left:1814px;top:758px;width:27px;height:27px;background:#f1f4f8;border-radius:5px"></div><svg class="a" style="left:1818px;top:768px;" width="18" height="8" viewBox="0 0 18 8"><circle cx="4.7" cy="3.80" r="1.45" fill="#5e6278"/><circle cx="8.7" cy="3.80" r="1.45" fill="#5e6278"/><circle cx="12.9" cy="3.80" r="1.45" fill="#5e6278"/></svg><div class="a" style="left:366px;top:818px;width:18px;height:18px;background:#eef1f5;border-radius:4px"></div><div class="t " style="left:430.0px;top:820.00px;font-size:14.35px;line-height:14.35px;color:#6e7189;font-weight:400;-webkit-text-stroke:0.35px #6e7189;letter-spacing:1.019px;">4</div><svg class="a" style="left:478px;top:814px;" width="28" height="27" viewBox="0 0 28 27"><defs><clipPath id="cav"><rect width="28" height="27" rx="5.5"/></clipPath><linearGradient id="gav" x1="0" y1="0" x2="1" y2="0.3"><stop offset="0" stop-color="#b5462a"/><stop offset="0.45" stop-color="#c9603d"/><stop offset="0.6" stop-color="#f1e9d6"/><stop offset="1" stop-color="#f3eee0"/></linearGradient></defs><g clip-path="url(#cav)"><rect width="28" height="27" fill="#2c2a2b"/><rect x="0" y="5" width="8" height="12" fill="#a59c93"/><rect x="8" y="5" width="14.5" height="13" fill="url(#gav)"/><rect x="22" y="6" width="6" height="12" fill="#c3bbb0"/><rect x="0" y="0" width="28" height="5" fill="#0f0d0c"/><rect x="0" y="17" width="28" height="4.5" fill="#3b3d44"/><rect x="0" y="21.5" width="28" height="5.5" fill="#3a2e2b"/><rect x="3" y="13" width="3" height="5" fill="#2a2828"/><rect x="9" y="17.5" width="13" height="1.2" fill="#8aa0a0"/></g></svg><div class="t " style="left:511.6px;top:819.00px;font-size:15.22px;line-height:15.22px;color:#6e7189;font-weight:400;-webkit-text-stroke:0.35px #6e7189;letter-spacing:-0.519px;">Nguyễn Hiếu</div><div class="t " style="left:1005.4px;top:820.00px;font-size:14.78px;line-height:14.78px;color:#6e7189;font-weight:400;-webkit-text-stroke:0.35px #6e7189;letter-spacing:-0.603px;">Nam</div><div class="t " style="left:1716.4px;top:820.00px;font-size:14.78px;line-height:14.78px;color:#6e7189;font-weight:400;-webkit-text-stroke:0.2px #6e7189;letter-spacing:0.458px;">02/23/2024</div><div class="a" style="left:1814px;top:813px;width:27px;height:27px;background:#f1f4f8;border-radius:5px"></div><svg class="a" style="left:1818px;top:823px;" width="18" height="8" viewBox="0 0 18 8"><circle cx="4.7" cy="3.80" r="1.45" fill="#5e6278"/><circle cx="8.7" cy="3.80" r="1.45" fill="#5e6278"/><circle cx="12.9" cy="3.80" r="1.45" fill="#5e6278"/></svg><div class="a" style="left:366px;top:873px;width:18px;height:18px;background:#eef1f5;border-radius:4px"></div><div class="t " style="left:430.25px;top:875.00px;font-size:14.35px;line-height:14.35px;color:#6e7189;font-weight:400;-webkit-text-stroke:0.35px #6e7189;letter-spacing:0.519px;">5</div><div class="a" style="left:477px;top:867px;width:30px;height:29px;background:#009ef7;border-radius:6px"></div><div class="t " style="left:481.5px;top:876.00px;font-size:14.93px;line-height:14.93px;color:#fff;font-weight:700;letter-spacing:-0.565px;">NC</div><div class="t " style="left:511.6px;top:874.00px;font-size:15.22px;line-height:15.22px;color:#6e7189;font-weight:400;-webkit-text-stroke:0.35px #6e7189;letter-spacing:-0.671px;">Nguyễn Cường</div><div class="t " style="left:691.7px;top:875.00px;font-size:14.78px;line-height:14.78px;color:#6e7189;font-weight:400;-webkit-text-stroke:0.2px #6e7189;letter-spacing:0.489px;">0359203335</div><div class="t " style="left:1005.4px;top:875.00px;font-size:14.78px;line-height:14.78px;color:#6e7189;font-weight:400;-webkit-text-stroke:0.35px #6e7189;letter-spacing:-0.603px;">Nam</div><div class="t " style="left:1137px;top:864.00px;font-size:13.91px;line-height:13.91px;color:#6e7189;font-weight:400;-webkit-text-stroke:0.35px #6e7189;letter-spacing:0.147px;">434, Xã Nam Nghĩa, Huyện Nam</div><div class="t " style="left:1137px;top:887.00px;font-size:13.91px;line-height:13.91px;color:#6e7189;font-weight:400;-webkit-text-stroke:0.35px #6e7189;letter-spacing:0.144px;">Đàn, Nghệ An</div><div class="t " style="left:1716.4px;top:875.00px;font-size:14.78px;line-height:14.78px;color:#6e7189;font-weight:400;-webkit-text-stroke:0.2px #6e7189;letter-spacing:0.458px;">02/23/2024</div><div class="a" style="left:1814px;top:868px;width:27px;height:27px;background:#f1f4f8;border-radius:5px"></div><svg class="a" style="left:1818px;top:878px;" width="18" height="8" viewBox="0 0 18 8"><circle cx="4.7" cy="3.80" r="1.45" fill="#5e6278"/><circle cx="8.7" cy="3.80" r="1.45" fill="#5e6278"/><circle cx="12.9" cy="3.80" r="1.45" fill="#5e6278"/></svg><div class="a" style="left:1855px;top:630px;width:3.8px;height:196px;background:#b3b1c2"></div><div class="a" style="left:1830px;top:745px;width:54px;height:54px;background:#48bb78;border-radius:50%;box-shadow:0 4px 10px rgba(0,0,0,0.18)"></div><svg class="a" style="left:1840px;top:755px;" width="34" height="34" viewBox="0 0 34 34"><path d="M3.5 5.5 Q3 3 5.5 2 L9.5 0.8 Q11 0.5 11.5 2 L13.3 8 Q13.6 9.3 12.4 10 L9.8 11.3 Q12.5 18.5 19.5 22 L21 19.5 Q21.8 18.3 23.2 18.7 L29.5 21 Q31 21.5 30.8 23 L29.8 27.8 Q29 31 26 31 Q6 28 3.5 5.5Z" fill="#fff"/></svg><div style="position:absolute;left:0;top:0;z-index:5"><div class="a" style="left:1622px;top:154px;width:287px;height:153px;background:#fff;border-radius:9px;box-shadow:0 0 30px rgba(60,70,100,0.12)"></div><div class="a" style="left:1624px;top:158px;width:280px;height:36px;background:#f1f4f8;border-radius:6px"></div><svg class="a" style="left:1639.7px;top:167.5px;" width="21" height="15" viewBox="0 0 21 15"><path d="M4.5 14.5 Q0 14.5 0 10.5 Q0 6.8 3.6 6.4 Q4.3 0.5 9.8 0.5 Q13.5 0.5 15 3.8 Q15.8 3.4 16.5 3.4 Q18.8 3.4 19.2 6.4 Q21 7.6 21 10.5 Q21 14.5 16.5 14.5Z" fill="#009ef7"/><path d="M10.3 4.8 L10.3 10.8 M7.6 8.2 L10.3 11 L13 8.2" stroke="#fff" stroke-width="1.7" fill="none"/></svg><div class="t " style="left:1669.3px;top:169.00px;font-size:14.35px;line-height:14.35px;color:#1a9ff0;font-weight:400;-webkit-text-stroke:0.2px #1a9ff0;letter-spacing:-0.030px;">Nhập file excel</div><svg class="a" style="left:1639.7px;top:203.5px;" width="21" height="15" viewBox="0 0 21 15"><path d="M4.5 14.5 Q0 14.5 0 10.5 Q0 6.8 3.6 6.4 Q4.3 0.5 9.8 0.5 Q13.5 0.5 15 3.8 Q15.8 3.4 16.5 3.4 Q18.8 3.4 19.2 6.4 Q21 7.6 21 10.5 Q21 14.5 16.5 14.5Z" fill="#5e6278"/><path d="M10.3 12 L10.3 6 M7.6 8.4 L10.3 5.6 L13 8.4" stroke="#fff" stroke-width="1.7" fill="none"/></svg><div class="t " style="left:1669.3px;top:205.00px;font-size:14.35px;line-height:14.35px;color:#5e6278;font-weight:400;-webkit-text-stroke:0.2px #5e6278;letter-spacing:0.099px;">Xuất file theo trang hiện tại</div><svg class="a" style="left:1639.7px;top:239.5px;" width="21" height="15" viewBox="0 0 21 15"><path d="M4.5 14.5 Q0 14.5 0 10.5 Q0 6.8 3.6 6.4 Q4.3 0.5 9.8 0.5 Q13.5 0.5 15 3.8 Q15.8 3.4 16.5 3.4 Q18.8 3.4 19.2 6.4 Q21 7.6 21 10.5 Q21 14.5 16.5 14.5Z" fill="#5e6278"/><path d="M10.3 12 L10.3 6 M7.6 8.4 L10.3 5.6 L13 8.4" stroke="#fff" stroke-width="1.7" fill="none"/></svg><div class="t " style="left:1669.3px;top:241.00px;font-size:14.35px;line-height:14.35px;color:#5e6278;font-weight:400;-webkit-text-stroke:0.2px #5e6278;letter-spacing:0.071px;">Xuất file tất cả</div><svg class="a" style="left:1639.7px;top:275.5px;" width="21" height="15" viewBox="0 0 21 15"><path d="M4.5 14.5 Q0 14.5 0 10.5 Q0 6.8 3.6 6.4 Q4.3 0.5 9.8 0.5 Q13.5 0.5 15 3.8 Q15.8 3.4 16.5 3.4 Q18.8 3.4 19.2 6.4 Q21 7.6 21 10.5 Q21 14.5 16.5 14.5Z" fill="#5e6278"/><path d="M10.3 12 L10.3 6 M7.6 8.4 L10.3 5.6 L13 8.4" stroke="#fff" stroke-width="1.7" fill="none"/></svg><div class="t " style="left:1669.3px;top:277.00px;font-size:14.35px;line-height:14.35px;color:#5e6278;font-weight:400;-webkit-text-stroke:0.2px #5e6278;letter-spacing:0.033px;">Xuất file kết quả tìm kiếm hiện tại</div><div class="a" style="left:1620px;top:154px;width:194px;height:40.5px;border:4.2px solid #ff0000;border-radius:5px"></div><div class="a" style="left:1561px;top:175px;width:29px;height:42.5px;background:#ff0000;box-shadow:0 1px 1px rgba(0,0,0,0.35)"></div><svg class="a" style="left:1589px;top:179px;" width="30" height="20" viewBox="0 0 30 20"><polygon points="0,8.8 27.5,2 0,16.2" fill="#ff0000"/></svg><svg class="a" style="left:1568px;top:178px;" width="16" height="30" viewBox="0 0 16 30"><path d="M9 2 L12 2 L12 27.4 L9 27.4Z M10 2.5 L11.2 4.5 Q8 8 3 9.8 L3 6.8 Q7 5 10 2.5Z" fill="#000"/></svg></div></body></html>
